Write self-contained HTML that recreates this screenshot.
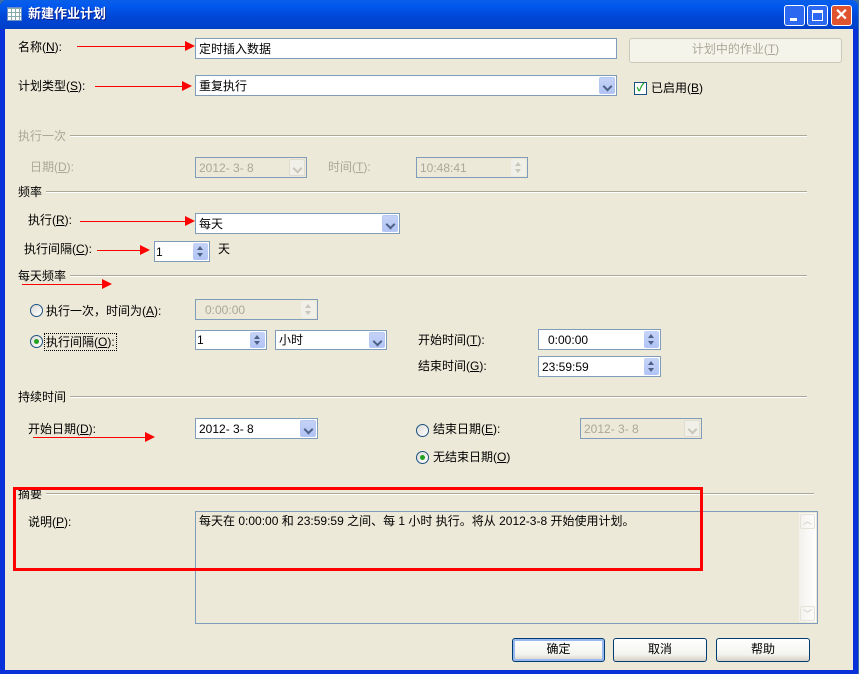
<!DOCTYPE html>
<html><head><meta charset="utf-8"><style>
*{margin:0;padding:0;box-sizing:border-box}
body{width:859px;height:674px;overflow:hidden;background:#3a6ea5;font-family:"Liberation Sans","Noto Sans CJK SC","WenQuanYi Zen Hei",sans-serif;font-size:12px;color:#000;position:relative}
.a{position:absolute;white-space:nowrap;line-height:14px}
.win{position:absolute;left:0;top:0;width:858px;height:674px;background:#0831d9;border-radius:7px 7px 0 0}
.title{position:absolute;left:0;top:0;width:858px;height:29px;border-radius:7px 7px 0 0;background:linear-gradient(#0a5fe8,#0058ee 20%,#0046d5 60%,#0040c8)}
.body{position:absolute;left:5px;top:29px;width:848px;height:641px;background:#ece9d8}
.box{position:absolute;background:#fff;border:1px solid #7f9db9}
.dis{background:#ece9d8;color:#aca899}
.dd{position:absolute;right:1px;top:1px;bottom:1px;width:16px;background:linear-gradient(#c6d3f7,#b1c4f5);border:1px solid #b7c9f2;border-radius:2px}
.dd:after{content:"";position:absolute;left:4px;top:5px;width:5px;height:5px;border-right:2px solid #4d6185;border-bottom:2px solid #4d6185;transform:rotate(45deg)}
.dis .dd{background:#f0efe8;border-color:#e0ddd0}
.dis .dd:after{border-color:#c9c7ba}
.sp{position:absolute;right:1px;top:1px;bottom:1px;width:15px;background:linear-gradient(#c6d3f7,#b1c4f5);border-radius:2px}
.sp:before{content:"";position:absolute;left:4px;top:3px;border:3px solid transparent;border-bottom:4px solid #4d6185;border-top:0}
.sp:after{content:"";position:absolute;left:4px;bottom:3px;border:3px solid transparent;border-top:4px solid #4d6185;border-bottom:0}
.dis .sp{background:#f0efe8}
.dis .sp:before{border-bottom-color:#c9c7ba}.dis .sp:after{border-top-color:#c9c7ba}
.t{position:absolute;left:3px;top:3px;line-height:14px}
.line{position:absolute;height:2px;border-top:1px solid #aca899;border-bottom:1px solid #fff}
.arr{position:absolute;height:1px;background:#f00}
.arr:after{content:"";position:absolute;right:-2px;top:-5px;border-left:10px solid #f00;border-top:5px solid transparent;border-bottom:5px solid transparent}
.rad{position:absolute;width:13px;height:13px;border-radius:50%;border:1px solid #1c5180;background:linear-gradient(135deg,#dcdbd5,#fff)}
.rad.on:after{content:"";position:absolute;left:3px;top:3px;width:5px;height:5px;border-radius:50%;background:#21a121}
.btn{position:absolute;border:1px solid #003c74;border-radius:3px;background:linear-gradient(#fff,#f3f3ef 70%,#d6d0c5);text-align:center;line-height:21px}
.gray{color:#aca899}
</style></head><body>
<div class="win"></div>
<div class="title"></div>
<div class="a" style="left:7px;top:7px;width:15px;height:14px;background:#fff;border:1px solid #6d8fc9;background-image:linear-gradient(90deg,transparent 3px,#8aa 3px,#8aa 4px,transparent 4px),linear-gradient(#8aa 1px,transparent 1px);background-size:4px 4px"></div>
<div class="a" style="left:28px;top:7px;color:#fff;font-weight:bold;font-size:13px;text-shadow:1px 1px #0a1e8c">新建作业计划</div>
<div class="a" style="left:784px;top:5px;width:21px;height:21px;border:1px solid #fff;border-radius:3px;background:#2d68f0"><div style="position:absolute;left:5px;top:12px;width:7px;height:3px;background:#fff"></div></div>
<div class="a" style="left:807px;top:5px;width:21px;height:21px;border:1px solid #fff;border-radius:3px;background:#2d68f0"><div style="position:absolute;left:4px;top:4px;width:11px;height:11px;border:1px solid #fff;border-top:3px solid #fff"></div></div>
<div class="a" style="left:831px;top:5px;width:21px;height:21px;border:1px solid #fff;border-radius:3px;background:#e0532f;color:#fff;font-weight:bold;font-size:16px;text-align:center;line-height:19px">✕</div>
<div class="body"></div>

<div class="a" style="left:18px;top:40px">名称(<u>N</u>):</div>
<div class="arr" style="left:77px;top:46px;width:116px"></div>
<div class="box" style="left:195px;top:38px;width:422px;height:21px"><div class="t">定时插入数据</div></div>
<div class="btn" style="left:629px;top:38px;width:213px;height:25px;border-color:#cac8bb;color:#aca899;background:#f5f4ea">计划中的作业(<u>T</u>)</div>

<div class="a" style="left:18px;top:79px">计划类型(<u>S</u>):</div>
<div class="arr" style="left:95px;top:86px;width:95px"></div>
<div class="box" style="left:195px;top:75px;width:422px;height:21px"><div class="t">重复执行</div><div class="dd"></div></div>
<div class="a" style="left:634px;top:82px;width:13px;height:13px;border:1px solid #1c5180;background:#fff;color:#21a121;font-size:11px;line-height:11px;text-align:center;font-weight:bold">✓</div>
<div class="a" style="left:651px;top:81px">已启用(<u>B</u>)</div>

<div class="a gray" style="left:18px;top:129px">执行一次</div>
<div class="line" style="left:70px;top:135px;width:737px"></div>
<div class="a gray" style="left:30px;top:160px">日期(<u>D</u>):</div>
<div class="box dis" style="left:195px;top:157px;width:112px;height:21px"><div class="t">2012- 3- 8</div><div class="dd"></div></div>
<div class="a gray" style="left:328px;top:160px">时间(<u>T</u>):</div>
<div class="box dis" style="left:416px;top:157px;width:112px;height:21px"><div class="t">10:48:41</div><div class="sp"></div></div>

<div class="a" style="left:18px;top:185px">频率</div>
<div class="line" style="left:46px;top:191px;width:761px"></div>
<div class="a" style="left:28px;top:213px">执行(<u>R</u>):</div>
<div class="arr" style="left:80px;top:221px;width:113px"></div>
<div class="box" style="left:195px;top:213px;width:205px;height:21px"><div class="t">每天</div><div class="dd"></div></div>
<div class="a" style="left:24px;top:242px">执行间隔(<u>C</u>):</div>
<div class="arr" style="left:97px;top:250px;width:51px"></div>
<div class="box" style="left:154px;top:241px;width:56px;height:21px"><div class="t" style="left:1px">1</div><div class="sp"></div></div>
<div class="a" style="left:218px;top:242px">天</div>

<div class="a" style="left:18px;top:269px">每天频率</div>
<div class="line" style="left:70px;top:275px;width:737px"></div>
<div class="arr" style="left:22px;top:284px;width:88px"></div>
<div class="rad" style="left:30px;top:304px"></div>
<div class="a" style="left:46px;top:304px">执行一次，时间为(<u>A</u>):</div>
<div class="box dis" style="left:195px;top:299px;width:123px;height:21px"><div class="t" style="left:9px">0:00:00</div><div class="sp"></div></div>
<div class="rad on" style="left:30px;top:335px"></div>
<div class="a" style="left:44px;top:333px;border:1px dotted #000;padding:1px 1px">执行间隔(<u>O</u>):</div>
<div class="box" style="left:195px;top:330px;width:72px;height:20px"><div class="t" style="left:1px;top:2px">1</div><div class="sp"></div></div>
<div class="box" style="left:275px;top:330px;width:112px;height:20px"><div class="t" style="top:2px">小时</div><div class="dd"></div></div>
<div class="a" style="left:418px;top:333px">开始时间(<u>T</u>):</div>
<div class="box" style="left:538px;top:329px;width:123px;height:21px"><div class="t" style="left:9px">0:00:00</div><div class="sp"></div></div>
<div class="a" style="left:418px;top:359px">结束时间(<u>G</u>):</div>
<div class="box" style="left:538px;top:356px;width:123px;height:21px"><div class="t">23:59:59</div><div class="sp"></div></div>

<div class="a" style="left:18px;top:390px">持续时间</div>
<div class="line" style="left:70px;top:396px;width:737px"></div>
<div class="a" style="left:28px;top:422px">开始日期(<u>D</u>):</div>
<div class="arr" style="left:33px;top:437px;width:120px"></div>
<div class="box" style="left:195px;top:418px;width:123px;height:21px"><div class="t">2012- 3- 8</div><div class="dd"></div></div>
<div class="rad" style="left:416px;top:424px"></div>
<div class="a" style="left:433px;top:422px">结束日期(<u>E</u>):</div>
<div class="box dis" style="left:580px;top:418px;width:122px;height:21px"><div class="t">2012- 3- 8</div><div class="dd"></div></div>
<div class="rad on" style="left:416px;top:451px"></div>
<div class="a" style="left:433px;top:450px">无结束日期(<u>O</u>)</div>

<div class="a" style="left:18px;top:487px">摘要</div>
<div class="line" style="left:46px;top:493px;width:768px"></div>
<div class="a" style="left:28px;top:515px">说明(<u>P</u>):</div>
<div class="box" style="left:195px;top:511px;width:623px;height:113px;background:#ece9d8"><div class="t" style="top:2px">每天在 0:00:00 和 23:59:59 之间、每 1 小时 执行。将从 2012-3-8 开始使用计划。</div>
<div style="position:absolute;right:1px;top:1px;bottom:1px;width:17px;background:linear-gradient(90deg,#f3f1ec,#fefefe)"><div style="position:absolute;left:1px;top:1px;width:15px;height:15px;border:1px solid #e5e2d8;border-radius:2px;color:#c9c7ba;font-size:9px;text-align:center;line-height:12px">︿</div><div style="position:absolute;left:1px;bottom:1px;width:15px;height:15px;border:1px solid #e5e2d8;border-radius:2px;color:#c9c7ba;font-size:9px;text-align:center;line-height:14px">﹀</div></div></div>
<div class="a" style="left:13px;top:487px;width:690px;height:84px;border:3px solid #f00"></div>

<div class="btn" style="left:512px;top:638px;width:93px;height:24px;box-shadow:inset 0 0 0 2px #98b8f0">确定</div>
<div class="btn" style="left:613px;top:638px;width:94px;height:24px">取消</div>
<div class="btn" style="left:716px;top:638px;width:94px;height:24px">帮助</div>
</body></html>
